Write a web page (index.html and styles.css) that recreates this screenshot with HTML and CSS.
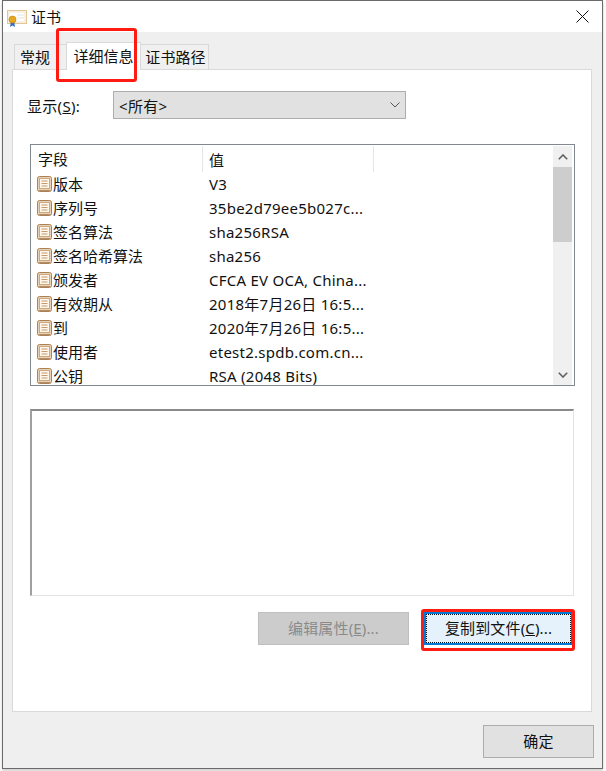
FILE: index.html
```html
<!DOCTYPE html>
<html lang="zh-cn">

<head>
    <meta charset="UTF-8">
    <meta name="viewport" content="width=device-width, initial-scale=1.0">
    <title>证书</title>
    <link rel="stylesheet" href="styles.css">
</head>

<body>
    <svg class="sprite" width="0" height="0">
        <symbol id="field-icon" viewBox="0 0 15 16">
            <rect x="0.500" y="0.500" width="14" height="15" rx="2" fill="#e9d2b6" stroke="#ad8158"/>
            <rect x="2.500" y="2.500" width="10" height="10" fill="#fdf7ec" stroke="#cfa77f"/>
            <path d="M4.500 5h6M4.500 7.500h6M4.500 10h6" stroke="#c39a70"/>
            <path d="M2 14.500h11" stroke="#b58c63"/>
        </symbol>
    </svg>

    <div class="window">
        <!-- 标题栏 -->
        <div class="titlebar">
            <svg class="cert-icon" width="20" height="17" viewBox="0 0 20 17">
                <rect x="0.500" y="0.500" width="19" height="13" fill="#fdf8ec" stroke="#e3c596"/>
                <rect x="2" y="2" width="16" height="10" fill="#fff" stroke="#f1e6d0"/>
                <path d="M10 5h7M10 8h7" stroke="#dfe3e6"/>
                <path d="M4 11l-1 6 2.500-1.500L8 17l-1-6z" fill="#2f6fd0"/>
                <circle cx="5.500" cy="9.500" r="3.500" fill="#e6a91f" stroke="#b97f12" stroke-width="0.600"/>
            </svg>
            <span class="title-text">证书</span>
            <svg class="close-icon" width="13" height="13" viewBox="0 0 13 13">
                <path d="M0.500 0.500l12 12M12.500 0.500l-12 12" stroke="#111" stroke-width="1" fill="none"/>
            </svg>
        </div>

        <div class="client">
            <!-- 选项卡 -->
            <div class="tabs">
                <div class="tab tab-first">常规</div>
                <div class="tab tab-active">详细信息</div>
                <div class="tab tab-last">证书路径</div>
                <div class="mark mark-tab"></div>
            </div>

            <div class="panel">
                <div class="show-row">
                    <label class="show-label">显示(<u>S</u>):</label>
                    <div class="select">
                        <span>&lt;所有&gt;</span>
                        <svg width="10" height="6" viewBox="0 0 10 6">
                            <path d="M0.500 0.500l4.500 4.500 4.500-4.500" stroke="#555" fill="none"/>
                        </svg>
                    </div>
                </div>

                <!-- 字段列表 -->
                <div class="list">
                    <div class="list-body">
                        <div class="list-head">
                            <div class="col-name">字段</div>
                            <div class="col-value">值</div>
                        </div>
                        <div class="row"><div class="col-name"><svg class="icon"><use href="#field-icon"/></svg>版本</div><div class="col-value">V3</div></div>
                        <div class="row"><div class="col-name"><svg class="icon"><use href="#field-icon"/></svg>序列号</div><div class="col-value">35be2d79ee5b027c...</div></div>
                        <div class="row"><div class="col-name"><svg class="icon"><use href="#field-icon"/></svg>签名算法</div><div class="col-value">sha256RSA</div></div>
                        <div class="row"><div class="col-name"><svg class="icon"><use href="#field-icon"/></svg>签名哈希算法</div><div class="col-value">sha256</div></div>
                        <div class="row"><div class="col-name"><svg class="icon"><use href="#field-icon"/></svg>颁发者</div><div class="col-value">CFCA EV OCA, China...</div></div>
                        <div class="row"><div class="col-name"><svg class="icon"><use href="#field-icon"/></svg>有效期从</div><div class="col-value">2018年7月26日 16:5...</div></div>
                        <div class="row"><div class="col-name"><svg class="icon"><use href="#field-icon"/></svg>到</div><div class="col-value">2020年7月26日 16:5...</div></div>
                        <div class="row"><div class="col-name"><svg class="icon"><use href="#field-icon"/></svg>使用者</div><div class="col-value">etest2.spdb.com.cn...</div></div>
                        <div class="row"><div class="col-name"><svg class="icon"><use href="#field-icon"/></svg>公钥</div><div class="col-value">RSA (2048 Bits)</div></div>
                    </div>
                    <div class="scrollbar">
                        <div class="scroll-btn">
                            <svg width="10" height="6" viewBox="0 0 10 6"><path d="M0.800 5.200L5 1l4.200 4.200" stroke="#606060" stroke-width="1.600" fill="none"/></svg>
                        </div>
                        <div class="scroll-thumb"></div>
                        <div class="scroll-track"></div>
                        <div class="scroll-btn">
                            <svg width="10" height="6" viewBox="0 0 10 6"><path d="M0.800 0.800L5 5l4.200-4.200" stroke="#606060" stroke-width="1.600" fill="none"/></svg>
                        </div>
                    </div>
                </div>

                <div class="detail"></div>

                <div class="panel-buttons">
                    <div class="btn btn-disabled">编辑属性(<u>E</u>)...</div>
                    <div class="btn btn-focus">
                        <span class="focus-line">复制到文件(<u>C</u>)...</span>
                        <div class="mark mark-btn"></div>
                    </div>
                </div>
            </div>

            <div class="footer">
                <div class="btn btn-ok">确定</div>
            </div>
        </div>
    </div>
</body>

</html>
```

FILE: styles.css
```css
/* 页面整体样式 */
body {
    margin: 0;
    padding: 0 0 0 2px;
    width: 604px;
    height: 771px;
    overflow: hidden;
    background-color: #fff;
    font-family: "Noto Sans", "Noto Sans CJK SC", sans-serif;
    font-size: 15px;
    color: #111;
}

.sprite {
    position: absolute;
}

/* 窗口 */
.window {
    width: 601px;
    height: 769px;
    box-sizing: border-box;
    border: 1px solid #6b6b6b;
    background-color: #fff;
    box-shadow: 0 2px 3px rgba(0, 0, 0, 0.2);
}

/* 标题栏 */
.titlebar {
    height: 31px;
    display: flex;
    align-items: center;
    padding: 0 13px 0 4px;
}

.cert-icon {
    margin-top: 4px;
}

.title-text {
    margin-left: 4px;
    flex: 1;
}

/* 主体 */
.client {
    height: 736px;
    box-sizing: border-box;
    padding: 10px 0 0 9px;
    background-color: #efefef;
}

/* 选项卡 */
.tabs {
    position: relative;
    display: flex;
    align-items: flex-end;
    height: 27px;
    padding-left: 2px;
}

.tab {
    box-sizing: border-box;
    height: 25px;
    line-height: 24px;
    border: 1px solid #d9d9d9;
    border-bottom: none;
    text-align: center;
    background-color: #f0f0f0;
}

.tab-first {
    width: 52px;
    padding-left: 5px;
    text-align: left;
    border-right: none;
}

.tab-active {
    position: relative;
    z-index: 1;
    width: 75px;
    height: 28px;
    margin-bottom: -1px;
    line-height: 27px;
    background-color: #fff;
}

.tab-last {
    width: 68px;
    padding-left: 2px;
    letter-spacing: 0.1px;
    border-left: none;
}

/* 红色标记框 */
.mark {
    position: absolute;
    z-index: 2;
    box-sizing: border-box;
    border: 3px solid #ff1a12;
    border-radius: 3px;
}

.mark-tab {
    left: 44px;
    top: -14px;
    width: 81px;
    height: 54px;
}

.mark-btn {
    left: -5px;
    top: -5px;
    width: 154px;
    height: 42px;
}

/* 面板 */
.panel {
    width: 580px;
    height: 643px;
    box-sizing: border-box;
    border: 1px solid #d9d9d9;
    background-color: #fff;
    padding: 21px 16px 0 17px;
}

.show-row {
    display: flex;
    align-items: center;
}

.show-label {
    width: 86px;
    margin-left: -3px;
    letter-spacing: 0.3px;
}

.select {
    box-sizing: border-box;
    width: 293px;
    height: 28px;
    padding: 0 5px 0 5px;
    display: flex;
    justify-content: space-between;
    align-items: center;
    border: 1px solid #adadad;
    background-color: #e1e1e1;
    letter-spacing: 0.3px;
}

/* 字段列表 */
.list {
    box-sizing: border-box;
    width: 545px;
    height: 242px;
    margin-top: 25px;
    padding: 1px 2px 0 0;
    display: flex;
    border: 1px solid #828790;
    overflow: hidden;
}

.list-body {
    flex: 1;
    overflow: hidden;
}

.list-head {
    display: flex;
    height: 26px;
    line-height: 28px;
}

.list-head .col-name {
    width: 172px;
    border-right: 1px solid #e5e5e5;
    padding-left: 7px;
}

.list-head .col-value {
    width: 171px;
    padding-left: 6px;
    border-right: 1px solid #e5e5e5;
}

.row {
    display: flex;
    height: 24px;
    line-height: 25px;
}

.col-name {
    box-sizing: border-box;
    width: 171px;
    padding-left: 6px;
    display: flex;
    align-items: center;
}

.col-value {
    box-sizing: border-box;
    padding-left: 7px;
    white-space: nowrap;
    letter-spacing: 0.25px;
}

.icon {
    width: 15px;
    height: 16px;
    margin-right: 1px;
    flex-shrink: 0;
}

/* 滚动条 */
.scrollbar {
    width: 19px;
    display: flex;
    flex-direction: column;
    background-color: #f0f0f0;
}

.scroll-btn {
    height: 21px;
    display: flex;
    align-items: center;
    justify-content: center;
}

.scroll-thumb {
    height: 75px;
    background-color: #cdcdcd;
}

.scroll-track {
    flex: 1;
}

/* 详情框 */
.detail {
    box-sizing: border-box;
    width: 544px;
    height: 187px;
    margin-top: 23px;
    border: 1px solid #e3e3e3;
    border-top: 2px solid #8a8a8a;
    border-left: 2px solid #a0a0a0;
}

/* 按钮 */
.panel-buttons {
    display: flex;
    margin-top: 16px;
    margin-left: 228px;
    gap: 15px;
}

.btn {
    box-sizing: border-box;
    height: 33px;
    padding-bottom: 2px;
    display: flex;
    align-items: center;
    justify-content: center;
    border: 1px solid #adadad;
    background-color: #e1e1e1;
    letter-spacing: 0.15px;
}

.btn-disabled {
    width: 151px;
    color: #8a8a8a;
    background-color: #cccccc;
    border-color: #bfbfbf;
}

.btn-focus {
    position: relative;
    width: 149px;
    padding-bottom: 0;
    border: 2px solid #0078d7;
    background-color: #e5f1fb;
}

.focus-line {
    box-sizing: border-box;
    width: 100%;
    height: 100%;
    padding-bottom: 2px;
    display: flex;
    align-items: center;
    justify-content: center;
    outline: 1px dotted #111;
    outline-offset: -1px;
}

.footer {
    display: flex;
    justify-content: flex-end;
    margin-top: 13px;
    width: 582px;
}

.btn-ok {
    width: 111px;
}
```
